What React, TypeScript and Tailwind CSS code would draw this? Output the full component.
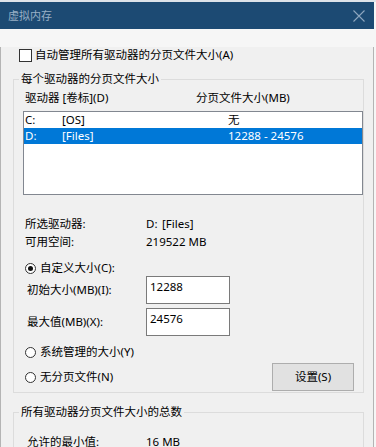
export default function App() {
  return (
    <div className="w-[376px] h-[447px] overflow-hidden bg-[#f6f6f6] text-[11.5px] leading-[16px] text-black font-['Noto_Sans','Noto_Sans_CJK_SC',sans-serif]">
      <div className="h-[2px] bg-[#dde3e9]" />
      <div className="w-[374px] h-[27px] bg-[#1c4a73] flex items-center justify-between pl-[8px] pr-[9px]">
        <span className="text-[#98afc5] text-[11px] leading-[16px]">虚拟内存</span>
        <svg width="12" height="12" viewBox="0 0 12 12">
          <path d="M0.5 0.5L11.5 11.5M11.5 0.5L0.5 11.5" stroke="#8ea7bf" strokeWidth="1.1" />
        </svg>
      </div>
      <div className="w-[374px] h-[418px] bg-[#f0f0f0] border-x border-[#b4b4b4] pl-[12px]">
        {/* checkbox row */}
        <div className="mt-[18px] h-[16px] flex items-center">
          <div className="ml-[6px] w-[13px] h-[13px] border border-[#333] bg-white" />
          <span className="ml-[3px]">自动管理所有驱动器的分页文件大小(A)</span>
        </div>

        {/* group 1 */}
        <fieldset className="mt-[8px] w-[351px] border border-[#dcdcdc] pb-[1px]">
          <legend className="ml-[5px] px-[2px] h-[16px] leading-[16px]">每个驱动器的分页文件大小</legend>
          <div className="pl-[9px]">
            <div className="mt-[3px] h-[16px] flex">
              <div className="w-[173px] pl-[2px]">驱动器 [卷标](D)</div>
              <div>分页文件大小(MB)</div>
            </div>
            <div className="mt-[5px] w-[340px] h-[84px] border border-[#828790] bg-white">
              <div className="h-[16px] flex">
                <div className="w-[38px] pl-[1px]">C:</div>
                <div className="w-[166px]">[OS]</div>
                <div>无</div>
              </div>
              <div className="h-[16px] flex bg-[#0078d7] text-white">
                <div className="w-[38px] pl-[1px]">D:</div>
                <div className="w-[166px]">[Files]</div>
                <div>12288 - 24576</div>
              </div>
            </div>

            <div className="mt-[21px] h-[16px] flex">
              <div className="w-[123px] pl-[2px]">所选驱动器:</div>
              <div className="w-[16px]">D:</div>
              <div>[Files]</div>
            </div>
            <div className="mt-[2px] h-[16px] flex">
              <div className="w-[123px] pl-[2px]">可用空间:</div>
              <div>219522 MB</div>
            </div>

            <div className="mt-[10px] h-[16px] flex items-center">
              <div className="ml-[2px] w-[11px] h-[11px] rounded-full border border-[#333] bg-white flex items-center justify-center">
                <div className="w-[5px] h-[5px] rounded-full bg-[#111]" />
              </div>
              <span className="ml-[4px]">自定义大小(C):</span>
            </div>
            <div className="h-[28px] flex items-center">
              <div className="w-[123px] pl-[4px]">初始大小(MB)(I):</div>
              <div className="w-[84px] h-[28px] border border-[#7a7a7a] bg-white pl-[3px] pt-[2px]">12288</div>
            </div>
            <div className="mt-[4px] h-[28px] flex items-center">
              <div className="w-[123px] pl-[4px]">最大值(MB)(X):</div>
              <div className="w-[84px] h-[28px] border border-[#7a7a7a] bg-white pl-[3px] pt-[2px]">24576</div>
            </div>

            <div className="mt-[8px] h-[16px] flex items-center">
              <div className="ml-[2px] w-[11px] h-[11px] rounded-full border border-[#333] bg-white" />
              <span className="ml-[4px]">系统管理的大小(Y)</span>
            </div>
            <div className="mt-[3px] h-[28px] flex items-center justify-between">
              <div className="flex items-center">
                <div className="ml-[2px] w-[11px] h-[11px] rounded-full border border-[#333] bg-white" />
                <span className="ml-[4px]">无分页文件(N)</span>
              </div>
              <div className="mr-[9px] w-[82px] h-[28px] border border-[#adadad] bg-[#e1e1e1] flex items-center justify-center">
                设置(S)
              </div>
            </div>
          </div>
        </fieldset>

        {/* group 2 */}
        <fieldset className="mt-[11px] w-[351px] border border-[#dcdcdc] pb-[20px]">
          <legend className="ml-[5px] px-[2px] h-[16px] leading-[16px]">所有驱动器分页文件大小的总数</legend>
          <div className="pl-[13px]">
            <div className="mt-[14px] h-[16px] flex">
              <div className="w-[119px]">允许的最小值:</div>
              <div>16 MB</div>
            </div>
          </div>
        </fieldset>
      </div>
    </div>
  );
}
